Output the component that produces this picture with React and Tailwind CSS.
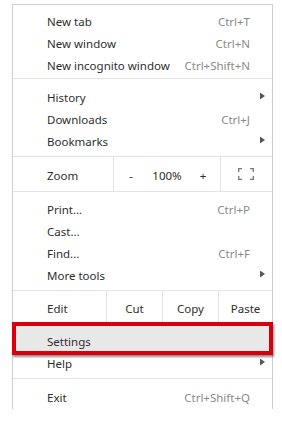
import React from 'react';

const font = { fontFamily: '"Noto Sans", "Open Sans", Arial, sans-serif' };

function Arrow() {
  return (
    <svg width="5" height="7" viewBox="0 0 5 7" className="absolute right-[7px] top-1/2 -translate-y-1/2">
      <path d="M0 0 L5 3.5 L0 7 Z" fill="#555" />
    </svg>
  );
}

function Item({ label, shortcut, sub }) {
  return (
    <div className="relative flex h-[22px] items-center justify-between pl-[34px] pr-[22px] pt-[3px]">
      <span className="text-[#2e2e2e]">{ label }</span>
      { shortcut && <span className="text-[#8a8a8a]">{ shortcut }</span> }
      { sub && <Arrow /> }
    </div>
  );
}

function FullscreenIcon() {
  return (
    <svg width="16" height="12" viewBox="0 0 16 12" fill="none" stroke="#777" strokeWidth="1.3">
      <path d="M0.7 4 V0.7 H4" />
      <path d="M12 0.7 H15.3 V4" />
      <path d="M15.3 8 V11.3 H12" />
      <path d="M4 11.3 H0.7 V8" />
    </svg>
  );
}

export default function App() {
  return (
    <div className="min-h-[425px] bg-white pt-[4px] pl-[12px] text-[11.5px] leading-none" style={font}>
      <div className="w-[261px] border-x border-t border-[#cfcfcf] pt-[4px] pb-[2px]">
        <Item label="New tab" shortcut="Ctrl+T" />
        <Item label="New window" shortcut="Ctrl+N" />
        <Item label="New incognito window" shortcut="Ctrl+Shift+N" />
        <div className="mt-[3px] mb-[6px] h-px bg-[#e3e3e3]" />
        <Item label="History" sub />
        <Item label="Downloads" shortcut="Ctrl+J" />
        <Item label="Bookmarks" sub />
        <div className="mt-[5px] h-px bg-[#e3e3e3]" />
        <div className="flex h-[34px] items-center pt-[3px]">
          <span className="w-[100px] pl-[34px] text-[#2e2e2e]">Zoom</span>
          <div className="-mt-[3px] flex h-[34px] w-[108px] items-center border-x border-[#e3e3e3] pt-[3px] text-[#2e2e2e]">
            <span className="w-[34px] text-center">-</span>
            <span className="flex-1 text-center">100%</span>
            <span className="w-[34px] text-center">+</span>
          </div>
          <div className="-mt-[3px] flex flex-1 items-center justify-center pr-[2px]">
            <FullscreenIcon />
          </div>
        </div>
        <div className="mb-[5px] h-px bg-[#e3e3e3]" />
        <Item label="Print..." shortcut="Ctrl+P" />
        <Item label="Cast..." />
        <Item label="Find..." shortcut="Ctrl+F" />
        <Item label="More tools" sub />
        <div className="mt-[5px] h-px bg-[#e3e3e3]" />
        <div className="flex h-[32px] items-center text-[#2e2e2e]">
          <span className="w-[93px] pl-[34px] pt-[3px]">Edit</span>
          <div className="flex h-full w-[57px] items-center justify-center border-x border-[#e3e3e3] pt-[3px]">Cut</div>
          <div className="flex h-full w-[55px] items-center justify-center pt-[3px]">Copy</div>
          <div className="flex h-full flex-1 items-center justify-center border-l border-[#e3e3e3] pt-[3px]">Paste</div>
        </div>
        <div className="mb-[5px] h-px bg-[#e3e3e3]" />
        <div className="relative">
          <div className="absolute -left-px -right-px top-[-7px] bottom-[-4px] border-[4px] border-[#d9000d] bg-[#e8e8e8] shadow-[1px_2px_2px_rgba(0,0,0,0.45)]" />
          <div className="relative">
            <Item label="Settings" />
          </div>
        </div>
        <Item label="Help" sub />
        <div className="mt-[5px] mb-[6px] h-px bg-[#e3e3e3]" />
        <Item label="Exit" shortcut="Ctrl+Shift+Q" />
      </div>
    </div>
  );
}
